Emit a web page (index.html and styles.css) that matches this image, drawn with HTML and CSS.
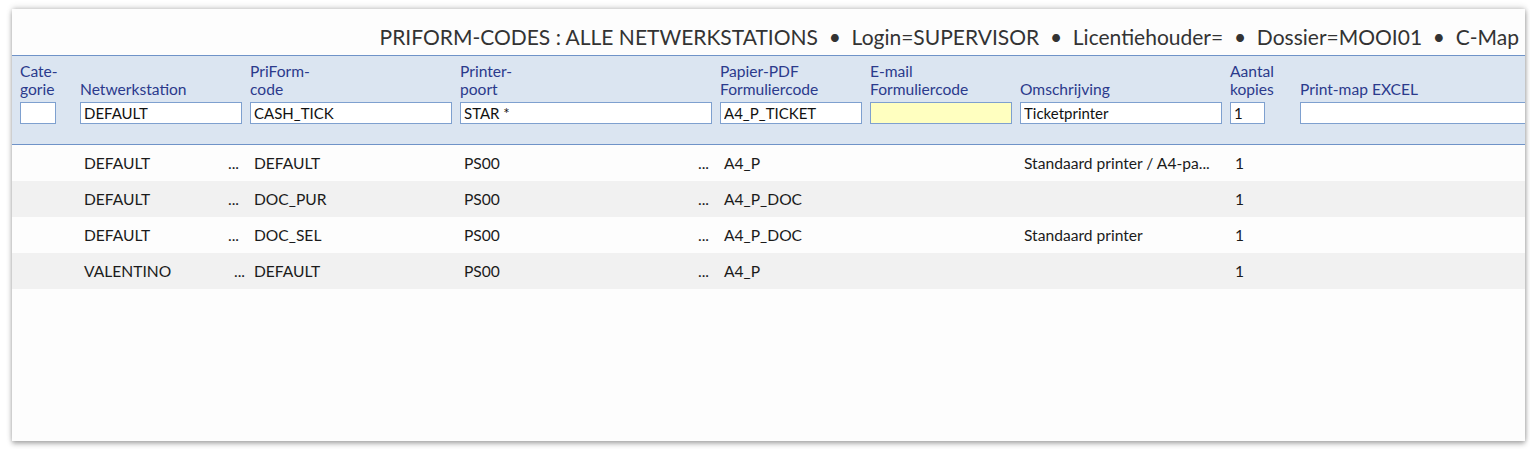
FILE: index.html
```html
<!DOCTYPE html>
<html lang="nl">
<head>
<meta charset="utf-8">
<title>PriForm-codes</title>
<link rel="stylesheet" href="styles.css">
</head>
<body>
<div class="page">
  <div class="panel">
    <div class="title">PRIFORM-CODES : ALLE NETWERKSTATIONS &nbsp;•&nbsp; Login=SUPERVISOR &nbsp;•&nbsp; Licentiehouder= &nbsp;•&nbsp; Dossier=MOOI01 &nbsp;•&nbsp; C-Map</div>
    <div class="band grid">
      <div class="hcell"><div class="lbl">Cate-<br>gorie</div><input class="inp w-cat" type="text" value=""></div>
      <div class="hcell"><div class="lbl">Netwerkstation</div><input class="inp" type="text" value="DEFAULT"></div>
      <div class="hcell"><div class="lbl">PriForm-<br>code</div><input class="inp" type="text" value="CASH_TICK"></div>
      <div class="hcell"><div class="lbl">Printer-<br>poort</div><input class="inp" type="text" value="STAR *"></div>
      <div class="hcell"><div class="lbl">Papier-PDF<br>Formuliercode</div><input class="inp" type="text" value="A4_P_TICKET"></div>
      <div class="hcell"><div class="lbl">E-mail<br>Formuliercode</div><input class="inp inp-yellow" type="text" value=""></div>
      <div class="hcell"><div class="lbl">Omschrijving</div><input class="inp" type="text" value="Ticketprinter"></div>
      <div class="hcell"><div class="lbl">Aantal<br>kopies</div><input class="inp w-kop" type="text" value="1"></div>
      <div class="hcell"><div class="lbl">Print-map EXCEL</div><input class="inp w-wide" type="text" value=""></div>
    </div>
    <div class="rows">
      <div class="row grid">
        <div class="cell"></div>
        <div class="cell dotted"><span>DEFAULT</span><span class="dots">...</span></div>
        <div class="cell">DEFAULT</div>
        <div class="cell dotted"><span>PS00</span><span class="dots">...</span></div>
        <div class="cell">A4_P</div>
        <div class="cell"></div>
        <div class="cell">Standaard printer / A4-pa...</div>
        <div class="cell kop">1</div>
        <div class="cell"></div>
      </div>
      <div class="row grid">
        <div class="cell"></div>
        <div class="cell dotted"><span>DEFAULT</span><span class="dots">...</span></div>
        <div class="cell">DOC_PUR</div>
        <div class="cell dotted"><span>PS00</span><span class="dots">...</span></div>
        <div class="cell">A4_P_DOC</div>
        <div class="cell"></div>
        <div class="cell"></div>
        <div class="cell kop">1</div>
        <div class="cell"></div>
      </div>
      <div class="row grid">
        <div class="cell"></div>
        <div class="cell dotted"><span>DEFAULT</span><span class="dots">...</span></div>
        <div class="cell">DOC_SEL</div>
        <div class="cell dotted"><span>PS00</span><span class="dots">...</span></div>
        <div class="cell">A4_P_DOC</div>
        <div class="cell"></div>
        <div class="cell">Standaard printer</div>
        <div class="cell kop">1</div>
        <div class="cell"></div>
      </div>
      <div class="row grid">
        <div class="cell"></div>
        <div class="cell dotted"><span>VALENTINO</span><span class="dots dots-shift">...</span></div>
        <div class="cell">DEFAULT</div>
        <div class="cell dotted"><span>PS00</span><span class="dots">...</span></div>
        <div class="cell">A4_P</div>
        <div class="cell"></div>
        <div class="cell"></div>
        <div class="cell kop">1</div>
        <div class="cell"></div>
      </div>
    </div>
  </div>
</div>
</body>
</html>
```
FILE: styles.css
```css
html, body {
  margin: 0;
  padding: 0;
  background: #ffffff;
}

body {
  font-family: Lato, "Liberation Sans", sans-serif;
  color: #1b1b1b;
}

.page {
  padding: 9px 5px 8px 12px;
  height: 449px;
  box-sizing: border-box;
}

.panel {
  height: 432px;
  background: #fdfdfd;
  box-shadow: 0 3px 5px rgba(0, 0, 0, 0.28), 0 -2px 6px rgba(0, 0, 0, 0.12), 1px 0 4px rgba(0, 0, 0, 0.12);
  overflow: hidden;
}

.title {
  height: 46px;
  box-sizing: border-box;
  padding: 15px 6px 5px 0;
  line-height: 26px;
  font-size: 21px;
  text-align: right;
  color: #333333;
  white-space: nowrap;
}

.grid {
  display: grid;
  grid-template-columns: 60px 170px 210px 260px 150px 150px 210px 70px 1fr;
  padding-left: 8px;
}

.band {
  height: 90px;
  box-sizing: border-box;
  background: #dbe5f1;
  border-top: 1px solid #6f93c8;
  border-bottom: 1px solid #6f93c8;
  padding-top: 6px;
}

.hcell {
  display: flex;
  flex-direction: column;
  min-width: 0;
}

.lbl {
  height: 36px;
  display: flex;
  flex-direction: column;
  justify-content: flex-end;
  line-height: 18px;
  font-size: 15.6px;
  color: #2b3a8c;
  white-space: nowrap;
}

.inp {
  margin-top: 4px;
  height: 22px;
  box-sizing: border-box;
  width: calc(100% - 8px);
  border: 1px solid #7ea0cf;
  background: #ffffff;
  padding: 0 3px;
  font-family: inherit;
  font-size: 15px;
  color: #111111;
  outline: none;
}

.inp-yellow { background: #ffffc0; }
.w-cat { width: 36px; }
.w-kop { width: 35px; }
.w-wide { width: 260px; }

.row {
  height: 36px;
  align-items: center;
  background: #fdfdfd;
}

.row:nth-child(even) { background: #f1f1f1; }

.cell {
  padding-left: 4px;
  padding-bottom: 1px;
  font-size: 15.6px;
  white-space: nowrap;
  min-width: 0;
}

.cell.kop { padding-left: 5px; }

.dotted {
  display: flex;
  justify-content: space-between;
  padding-right: 11px;
}

.dots-shift { margin-right: -6px; }
```
